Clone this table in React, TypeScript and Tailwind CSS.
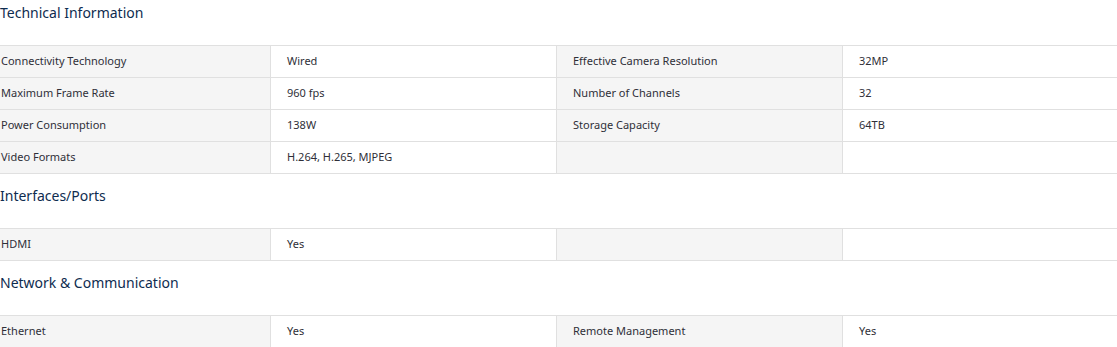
type Row = [string, string, string, string];

interface Section {
  title: string;
  rows: Row[];
}

const sections: Section[] = [
  {
    title: 'Technical Information',
    rows: [
      ['Connectivity Technology', 'Wired', 'Effective Camera Resolution', '32MP'],
      ['Maximum Frame Rate', '960 fps', 'Number of Channels', '32'],
      ['Power Consumption', '138W', 'Storage Capacity', '64TB'],
      ['Video Formats', 'H.264, H.265, MJPEG', '', '']
    ]
  },
  {
    title: 'Interfaces/Ports',
    rows: [['HDMI', 'Yes', '', '']]
  },
  {
    title: 'Network & Communication',
    rows: [['Ethernet', 'Yes', 'Remote Management', 'Yes']]
  }
];

const SpecTable = ({ rows }: { rows: Row[] }) => (
  <div className="border-t border-[#e0e0e0]">
    {rows.map((row, i) => (
      <div
        key={i}
        className="grid h-8 grid-cols-[270px_286px_286px_1fr] border-b border-[#e0e0e0] text-[11px] text-[#2f2f38]"
      >
        <div className="flex items-center bg-[#f5f5f5] pl-px">{row[0]}</div>
        <div className="flex items-center border-l border-[#e0e0e0] pl-4">{row[1]}</div>
        <div className="flex items-center border-l border-[#e0e0e0] bg-[#f5f5f5] pl-4">{row[2]}</div>
        <div className="flex items-center border-l border-[#e0e0e0] pl-4">{row[3]}</div>
      </div>
    ))}
  </div>
);

export default function App() {
  return (
    <div className="w-[1117px] bg-white font-['Noto_Sans',sans-serif]">
      {sections.map((section, i) => (
        <section key={section.title}>
          <h3
            className={`${i === 0 ? 'mt-[3px]' : 'mt-[12px]'} mb-[22px] text-[14px] leading-5 text-[#0e2c4f]`}
          >
            {section.title}
          </h3>
          <SpecTable rows={section.rows} />
        </section>
      ))}
    </div>
  );
}
